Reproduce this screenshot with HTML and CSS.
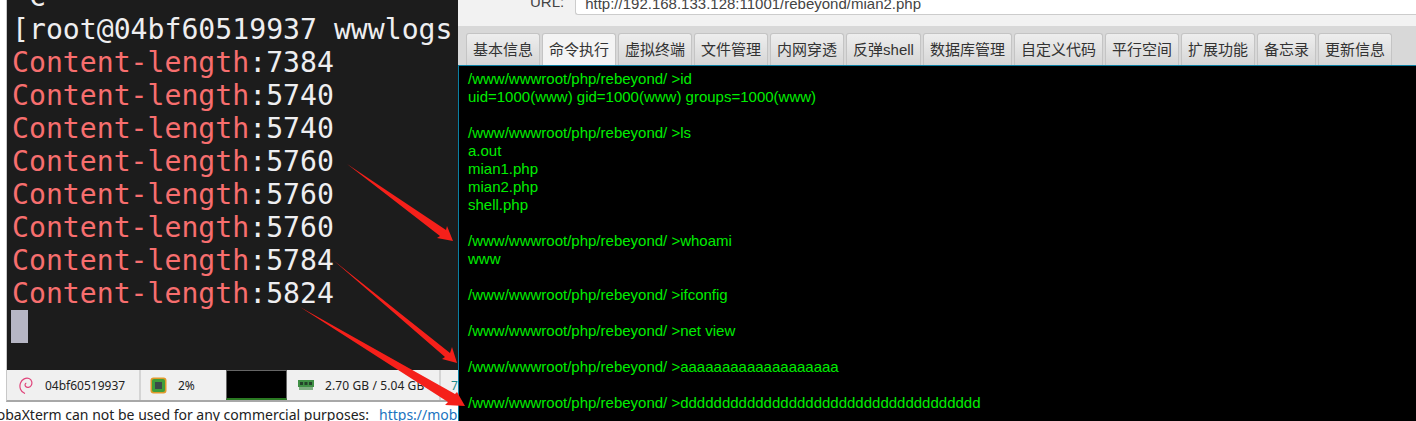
FILE: index.html
```html
<!DOCTYPE html>
<html lang="zh">
<head>
<meta charset="utf-8">
<title>Webshell</title>
<link rel="stylesheet" href="styles.css">
</head>
<body>
<div class="page">
  <section class="left">
    <div class="term">
      <div class="tl white clipped">^C</div>
      <div class="tl white"><span class="br">[</span>root@04bf60519937 wwwlogs</div>
      <div class="tl"><span class="red">Content-length</span>:7384</div>
      <div class="tl"><span class="red">Content-length</span>:5740</div>
      <div class="tl"><span class="red">Content-length</span>:5740</div>
      <div class="tl"><span class="red">Content-length</span>:5760</div>
      <div class="tl"><span class="red">Content-length</span>:5760</div>
      <div class="tl"><span class="red">Content-length</span>:5760</div>
      <div class="tl"><span class="red">Content-length</span>:5784</div>
      <div class="tl"><span class="red">Content-length</span>:5824</div>
      <div class="cursor"></div>
    </div>
    <div class="status">
      <div class="cell c1">
        <svg width="14" height="17" viewBox="0 0 14 17"><path d="M6 16.500C1.500 15 0 10 1.500 6 3 2 7 0.500 10 1.500c3 1 3.500 5 2.200 7-1.200 2-4.200 2.500-5.500 1-1-1.200-.8-3 .6-3.500" fill="none" stroke="#e0457b" stroke-width="1.200"/></svg>
        <span>04bf60519937</span>
      </div>
      <div class="cell c2">
        <svg width="17" height="17" viewBox="0 0 17 17"><rect x="0.500" y="0.500" width="16" height="16" rx="3" fill="#e09a2a"/><rect x="2" y="2" width="13" height="13" rx="2" fill="#3f9e3a"/><rect x="5" y="5" width="7" height="7" fill="#3c4a48"/></svg>
        <span>2%</span>
      </div>
      <div class="graph"></div>
      <div class="cell c3">
        <svg width="16" height="10" viewBox="0 0 16 10"><rect width="16" height="7" fill="#3f8f45"/><rect x="2" y="2" width="3" height="3" fill="#23422a"/><rect x="6.500" y="2" width="3" height="3" fill="#23422a"/><rect x="11" y="2" width="3" height="3" fill="#23422a"/><rect x="1" y="7" width="14" height="3" fill="#7fae82"/></svg>
        <span>2.70 GB / 5.04 GB</span>
      </div>
      <div class="cell c4"><span class="teal">7</span></div>
    </div>
    <div class="notice">MobaXterm can not be used for any commercial purposes:<a class="link">https://mobaxterm.mobatek.net</a></div>
  </section>
  <section class="right">
    <div class="urlbar">
      <span class="urllabel">URL:</span>
      <div class="urlinput">http://192.168.133.128:11001/rebeyond/mian2.php</div>
    </div>
    <div class="tabs">
      <div class="tab">基本信息</div>
      <div class="tab active">命令执行</div>
      <div class="tab">虚拟终端</div>
      <div class="tab">文件管理</div>
      <div class="tab">内网穿透</div>
      <div class="tab">反弹shell</div>
      <div class="tab">数据库管理</div>
      <div class="tab">自定义代码</div>
      <div class="tab">平行空间</div>
      <div class="tab">扩展功能</div>
      <div class="tab">备忘录</div>
      <div class="tab">更新信息</div>
    </div>
    <pre class="console">/www/wwwroot/php/rebeyond/ &gt;id
uid=1000(www) gid=1000(www) groups=1000(www)

/www/wwwroot/php/rebeyond/ &gt;ls
a.out
mian1.php
mian2.php
shell.php

/www/wwwroot/php/rebeyond/ &gt;whoami
www

/www/wwwroot/php/rebeyond/ &gt;ifconfig

/www/wwwroot/php/rebeyond/ &gt;net view

/www/wwwroot/php/rebeyond/ &gt;aaaaaaaaaaaaaaaaaaa

/www/wwwroot/php/rebeyond/ &gt;dddddddddddddddddddddddddddddddddddd</pre>
  </section>
  <svg class="arrows" width="1416" height="421" viewBox="0 0 1416 421">
    <path d="M347 164L446 230 447 226 453 241 437 238 440 236Z" fill="#f5201a"/>
    <path d="M333 260L450 353 452 347 457 363 442 359 445 357Z" fill="#f5201a"/>
    <path d="M300 307L455 394 457 392 465 406 445 405 448 402Z" fill="#f5201a"/>
  </svg>
</div>
</body>
</html>
```
FILE: styles.css
```css
* { box-sizing: border-box; }
html, body { margin: 0; padding: 0; background: #fff; }
.page { position: relative; display: grid; grid-template-columns: 458px 958px; width: 1416px; height: 421px; overflow: hidden; }
.left { display: flex; flex-direction: column; height: 421px; padding-left: 6px; overflow: hidden; }
.term { height: 370px; flex: none; background: #1c1c1c; padding: 0 0 0 5px; overflow: hidden; font: 28.15px/33px "DejaVu Sans Mono", monospace; color: #eeeef0; border-left: 1px solid #c8c8c8; }
.tl { height: 33px; white-space: pre; }
.clipped { margin-top: -20px; }
.red { color: #f76e6e; }
.cursor { width: 17px; height: 33px; margin-left: -1px; background: #b6b6c4; }
.status { display: flex; height: 32px; flex: none; background: #f0f0f0; border-left: 1px solid #c8c8c8; border-bottom: 2px solid #a8a8a8; font: 12px "Noto Sans", sans-serif; color: #222; }
.cell { display: flex; align-items: center; border-right: 2px solid #d4d4d4; height: 30px; white-space: nowrap; }
.c1 { width: 134px; padding-left: 12px; gap: 12px; }
.c2 { width: 85px; padding-left: 9px; gap: 11px; border-right: 0; }
.c3 { width: 154px; padding-left: 11px; gap: 11px; letter-spacing: 0.1px; }
.c4 { flex: 1; padding-left: 10px; border-right: 0; }
.teal { color: #1c8a8a; }
.graph { width: 61px; height: 30px; flex: none; background: #000; border: 1px solid #666; border-bottom: 2px solid #2a7a22; }
.notice { margin-left: -22px; padding-top: 4px; font: 14px/17px "Noto Sans", sans-serif; white-space: nowrap; color: #222; background: #fff; }
.link { color: #1a73c0; margin-left: 10px; }
.right { display: flex; flex-direction: column; height: 421px; min-width: 0; background: #d8d8d8; overflow: hidden; }
.urlbar { display: flex; height: 27px; flex: none; gap: 11px; align-items: flex-start; padding-left: 72px; background: linear-gradient(#f2f2f2 0 26px, #d8d8d8 26px); }
.urllabel { font: 15px/14px "Liberation Sans", sans-serif; color: #444; margin-top: -5px; }
.urlinput { flex: 1; height: 15px; padding-left: 9px; background: #fff; border: 1px solid #ccc; border-top: 0; border-right: 0; border-radius: 0 0 0 3px; font: 15px/7px "Liberation Sans", sans-serif; color: #444; }
.tabs { display: flex; gap: 2px; height: 38px; flex: none; padding: 6px 0 0 8px; align-items: stretch; }
.tab { padding: 0 6px; height: 32px; border: 1px solid #c4c4c4; border-bottom: 0; border-radius: 3px 3px 0 0; background: linear-gradient(#eeeeee, #d6d6d6); font: 15px/31px "Liberation Sans", "Noto Sans CJK SC", sans-serif; color: #333; white-space: nowrap; }
.active { background: #f4f4f4; }
.console { flex: 1; margin: 0; padding: 4px 0 0 9px; background: #000; border-top: 1px solid #0b7fa3; border-left: 1px solid #0b7fa3; color: #00ee00; font: 15px/18px "Liberation Sans", sans-serif; overflow: hidden; }
.arrows { position: absolute; left: 0; top: 0; pointer-events: none; }
```
